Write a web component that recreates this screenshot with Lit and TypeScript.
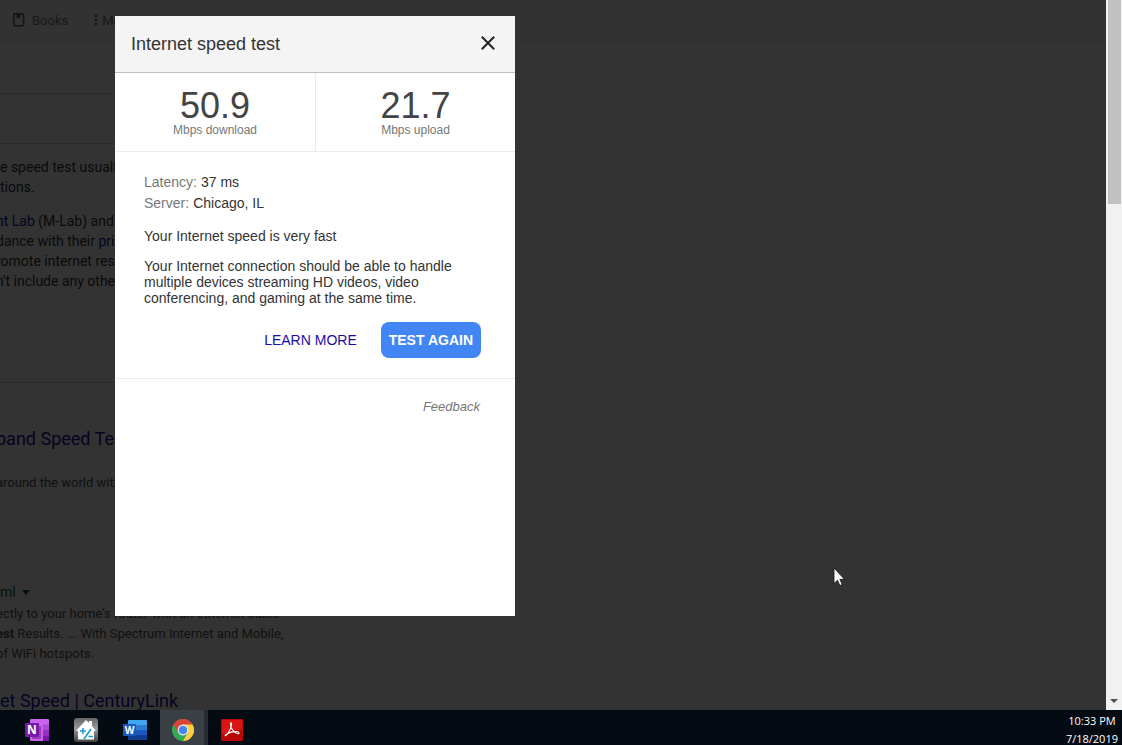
import { LitElement, html, css } from "lit";
import { customElement } from "lit/decorators.js";

@customElement("search-page")
class SearchPage extends LitElement {
  static styles = css`
    :host {
      display: block;
      height: 100%;
      overflow: hidden;
      background: #fff;
      color: #333;
      font-family: Roboto, sans-serif;
      white-space: nowrap;
    }
    .nav {
      display: flex;
      align-items: center;
      gap: 24px;
      height: 40px;
      padding: 0 0 2px 12px;
      border-bottom: 1px solid #ebebeb;
      background: #fafafa;
      font-size: 13px;
    }
    .tab {
      display: flex;
      align-items: center;
      gap: 6px;
      color: #777;
      text-decoration: none;
    }
    .tab.more { gap: 4px; }
    .tab svg { display: block; }
    .strip {
      height: 49px;
      width: 320px;
      border-bottom: 1px solid #d0d0d0;
    }
    .strip.tools { height: 50px; }
    .about {
      display: flex;
      flex-direction: column;
      gap: 14px;
      width: 320px;
      padding: 13px 0 91px;
      border-bottom: 1px solid #d8d8d8;
      font-size: 14px;
      line-height: 20px;
    }
    p, h3 { margin: 0; }
    a { color: #1a0dab; text-decoration: none; }
    h3 {
      font-size: 18px;
      font-weight: 400;
      line-height: 24px;
    }
    .results {
      display: flex;
      flex-direction: column;
      padding-top: 44px;
    }
    .snippet {
      margin-top: 22px;
      color: #545454;
      font-size: 13px;
      line-height: 20px;
    }
    .cite {
      display: flex;
      align-items: center;
      gap: 6px;
      margin-top: 89px;
      color: #006621;
      font-size: 14px;
      line-height: 20px;
    }
    .cite + .snippet { margin: 2px 0 25px; }
    .about .bleed,
    .results .bleed { margin-left: -4px; }
  `;
  render() {
    return html`
      <nav class="nav">
        <a class="tab" href="#">
          <svg width="14" height="16" viewBox="0 0 14 16" fill="none" stroke="#666" stroke-width="1.6">
            <rect x="1.8" y="1.8" width="9.8" height="12" rx="1" />
            <path d="M4.6 2v5l1.8-1.4L8.2 7V2z" fill="#666" stroke="none" />
          </svg>Books</a>
        <a class="tab more" href="#">
          <svg width="6" height="14" viewBox="0 0 6 14" fill="#666">
            <circle cx="4" cy="3" r="1.3" /><circle cx="4" cy="7" r="1.3" /><circle cx="4" cy="11" r="1.3" />
          </svg>More</a>
      </nav>
      <div class="strip tools"></div>
      <div class="strip"></div>
      <section class="about">
        <p>e speed test usually<br />tions.</p>
        <p class="bleed"><a href="#">nt Lab</a> (M-Lab) and<br />dance with their <a href="#">priv</a><br />romote internet rese<br />n't include any other</p>
      </section>
      <section class="results">
        <h3 class="bleed"><a href="#">band Speed Test</a></h3>
        <p class="snippet bleed">around the world with</p>
        <div class="cite">ml
          <svg width="8" height="5" viewBox="0 0 8 5"><path d="M0 0h8L4 5z" fill="#006621" /></svg>
        </div>
        <p class="snippet bleed">ectly to your home's router with an ethernet cable<br /><b>est</b> Results. ... With Spectrum Internet and Mobile,<br />of WiFi hotspots.</p>
        <h3><a href="#">et Speed | CenturyLink</a></h3>
      </section>
    `;
  }
}

@customElement("speed-dialog")
class SpeedDialog extends LitElement {
  static styles = css`
    :host {
      display: block;
      box-sizing: border-box;
      background: #fff;
      color: #333;
      font: 14px/16px "Liberation Sans", Arial, sans-serif;
    }
    .head {
      display: flex;
      align-items: center;
      justify-content: space-between;
      height: 56px;
      padding: 0 16px;
      border-bottom: 1px solid #bdbdbd;
      background: #f4f4f4;
    }
    h2 {
      margin: 0;
      font-size: 18px;
      font-weight: 400;
      line-height: 24px;
    }
    button {
      border: 0;
      font-family: inherit;
      cursor: pointer;
    }
    .close {
      display: grid;
      place-items: center;
      width: 22px;
      height: 24px;
      padding: 0 0 2px;
      background: none;
    }
    .stats {
      display: grid;
      grid-template-columns: 1fr 1fr;
      border-bottom: 1px solid #ebebeb;
      text-align: center;
    }
    .stat { padding: 16px 0 14px; }
    .stat + .stat { border-left: 1px solid #ebebeb; }
    .value {
      color: #444;
      font-size: 36px;
      line-height: 34px;
    }
    .unit {
      color: #777;
      font-size: 12px;
      line-height: 14px;
    }
    .body {
      padding: 20px 34px 20px 29px;
      border-bottom: 1px solid #ebebeb;
    }
    dl { margin: 0 0 14px; }
    .row {
      display: flex;
      gap: 4px;
      line-height: 21px;
    }
    dt { color: #777; }
    dd { margin: 0; }
    p { margin: 0 0 14px; }
    .actions {
      display: flex;
      justify-content: flex-end;
      align-items: center;
      gap: 24px;
      padding-top: 2px;
    }
    .learn {
      color: #1a0dab;
      text-decoration: none;
    }
    .again {
      height: 36px;
      padding: 0 8px;
      border-radius: 8px;
      background: #4285f4;
      color: #fff;
      font-size: 14px;
      font-weight: 700;
    }
    .foot {
      display: flex;
      justify-content: flex-end;
      padding: 20px 35px;
    }
    .feedback {
      color: #777;
      font-size: 13px;
      font-style: italic;
      text-decoration: none;
    }
  `;
  render() {
    return html`
      <header class="head">
        <h2>Internet speed test</h2>
        <button class="close" aria-label="Close">
          <svg width="14" height="14" viewBox="0 0 14 14" stroke="#222" stroke-width="2"><path d="M.8.8l12.4 12.4M13.2.8L.8 13.2" /></svg>
        </button>
      </header>
      <div class="stats">
        <div class="stat"><div class="value">50.9</div><div class="unit">Mbps download</div></div>
        <div class="stat"><div class="value">21.7</div><div class="unit">Mbps upload</div></div>
      </div>
      <div class="body">
        <dl>
          <div class="row"><dt>Latency:</dt><dd>37 ms</dd></div>
          <div class="row"><dt>Server:</dt><dd>Chicago, IL</dd></div>
        </dl>
        <p>Your Internet speed is very fast</p>
        <p>Your Internet connection should be able to handle multiple devices streaming HD videos, video conferencing, and gaming at the same time.</p>
        <div class="actions">
          <a class="learn" href="#">LEARN MORE</a>
          <button class="again">TEST AGAIN</button>
        </div>
      </div>
      <footer class="foot"><a class="feedback" href="#">Feedback</a></footer>
    `;
  }
}

@customElement("task-bar")
class TaskBar extends LitElement {
  static styles = css`
    :host {
      display: flex;
      justify-content: space-between;
      overflow: hidden;
      background: #050b13;
    }
    .apps {
      display: flex;
      padding-left: 13px;
    }
    .app {
      display: grid;
      place-items: center;
      width: 49px;
      height: 100%;
      padding: 4px 1px 0 0;
      border: 0;
      background: none;
    }
    .app.active {
      width: 48px;
      padding: 4px 0 0 2px;
      border-right: 4px solid #262b31;
      background: #3a3f45;
    }
    svg { display: block; }
    .mark { font: 700 12px "Open Sans", sans-serif; }
    .mark.small { font-size: 10px; }
    .clock {
      padding: 2px 4px 0 0;
      color: #fff;
      font: 11px/18px "Open Sans", "Noto Sans", sans-serif;
      text-align: center;
    }
  `;
  render() {
    return html`
      <div class="apps">
        <button class="app" aria-label="OneNote">
          <svg width="24" height="24" viewBox="0 0 24 24">
            <rect x="5" y="1" width="19" height="22" rx="1" fill="#ca64ea" />
            <path d="M18 6.500h6v5.500h-6z" fill="#ae4bd5" /><path d="M18 12h6v5.500h-6z" fill="#9332bf" /><path d="M18 17.500h6V22a1 1 0 0 1-1 1h-5z" fill="#7719aa" />
            <path d="M14 8h2v13H7v-2h7z" fill="#9b3cc0" />
            <rect y="5" width="14" height="14" rx="1" fill="#7719aa" />
            <text class="mark" x="7" y="16" text-anchor="middle" fill="#fff">N</text>
          </svg>
        </button>
        <button class="app" aria-label="Home calculator">
          <svg width="24" height="24" viewBox="0 0 24 24">
            <defs><linearGradient id="g" x2="0" y2="1"><stop stop-color="#666" /><stop offset=".45" stop-color="#999" /><stop offset="1" stop-color="#444" /></linearGradient></defs>
            <rect width="24" height="24" rx="3" fill="url(#g)" />
            <path d="M2 13L12 2l3 3V3h3v5l4 5h-2v8.500H4V13z" fill="#fff" />
            <path d="M9 10v6M6 13h6M17 11L10 21M14.500 18.500h4.500" stroke="#1a9ad7" stroke-width="1.600" fill="none" />
          </svg>
        </button>
        <button class="app" aria-label="Word">
          <svg width="24" height="24" viewBox="0 0 24 24">
            <path d="M5 3a1 1 0 0 1 1-1h17a1 1 0 0 1 1 1v4H5z" fill="#41a5ee" /><path d="M5 7h19v5H5z" fill="#2b7cd3" /><path d="M5 12h19v5H5z" fill="#185abd" /><path d="M5 17h19v4a1 1 0 0 1-1 1H6a1 1 0 0 1-1-1z" fill="#103f91" />
            <rect y="6" width="13" height="12" rx="1" fill="#185abd" />
            <text class="mark small" x="6.500" y="15.500" text-anchor="middle" fill="#fff">W</text>
          </svg>
        </button>
        <button class="app active" aria-label="Chrome">
          <svg width="24" height="24" viewBox="0 0 24 24">
            <circle cx="12" cy="12" r="11" fill="#34a853" />
            <path d="M12 12L2.470 6.500A11 11 0 0 1 21.530 6.500z" fill="#db4437" />
            <path d="M2.470 6.500L7.200 14.700 12 12V6.500z" fill="#db4437" />
            <path d="M12 6.500h9.530A11 11 0 0 1 12 23l4.760-8.250z" fill="#ffcd40" />
            <circle cx="12" cy="12" r="5.400" fill="#f1f1f1" />
            <circle cx="12" cy="12" r="4.300" fill="#4285f4" />
          </svg>
        </button>
        <button class="app" aria-label="Acrobat Reader">
          <svg width="22" height="22" viewBox="0 0 22 22">
            <rect width="22" height="22" rx="1" fill="#b80808" />
            <path d="M1 1h20v9L1 15z" fill="#dc1414" />
            <path d="M4.500 16.800c1.500-.2 4.500-5.500 5.700-9.300.5-1.800.6-3.500-.1-3.600-1-.1-.8 2.500.3 5 1.400 3 4.600 5.700 6.900 5.800 1.500 0 1-1.600-1-1.900-3-.4-8 .8-10.500 2.200-1.600.9-2 1.900-1.300 1.800z" fill="none" stroke="#fff" stroke-width="1.100" />
          </svg>
        </button>
      </div>
      <div class="clock"><div>10:33 PM</div><div>7/18/2019</div></div>
    `;
  }
}

@customElement("app-root")
class AppRoot extends LitElement {
  static styles = css`
    :host {
      display: grid;
      grid-template-rows: minmax(0, 1fr) 35px;
      height: 100vh;
      overflow: hidden;
    }
    .window {
      display: grid;
      grid-template-columns: minmax(0, 1fr) 16px;
      min-height: 0;
    }
    .view {
      position: relative;
      min-height: 0;
    }
    .shade {
      position: absolute;
      inset: 0;
      background: rgba(0, 0, 0, 0.8);
    }
    .dialog {
      position: absolute;
      top: 16px;
      left: 115px;
      width: 400px;
      min-height: 600px;
    }
    .pointer {
      position: absolute;
      top: 567px;
      left: 833px;
    }
    .scroll {
      display: flex;
      flex-direction: column;
      justify-content: space-between;
      align-items: center;
      padding-bottom: 7px;
      background: #f1f1f1;
    }
    .thumb {
      width: 13px;
      height: 204px;
      background: #c1c1c1;
    }
  `;
  render() {
    return html`
      <div class="window">
        <main class="view">
          <search-page></search-page>
          <div class="shade"></div>
          <speed-dialog class="dialog" role="dialog" aria-label="Internet speed test"></speed-dialog>
          <svg class="pointer" width="12" height="20" viewBox="0 0 12 20"><path d="M1 1v15.500l3.500-3.300 2.300 5.300 2.400-1-2.300-5.200h4.600z" fill="#fff" stroke="#111" stroke-width=".8" /></svg>
        </main>
        <div class="scroll">
          <div class="thumb"></div>
          <svg width="8" height="4" viewBox="0 0 8 4"><path d="M0 0h8L4 4z" fill="#505050" /></svg>
        </div>
      </div>
      <task-bar></task-bar>
    `;
  }
}
